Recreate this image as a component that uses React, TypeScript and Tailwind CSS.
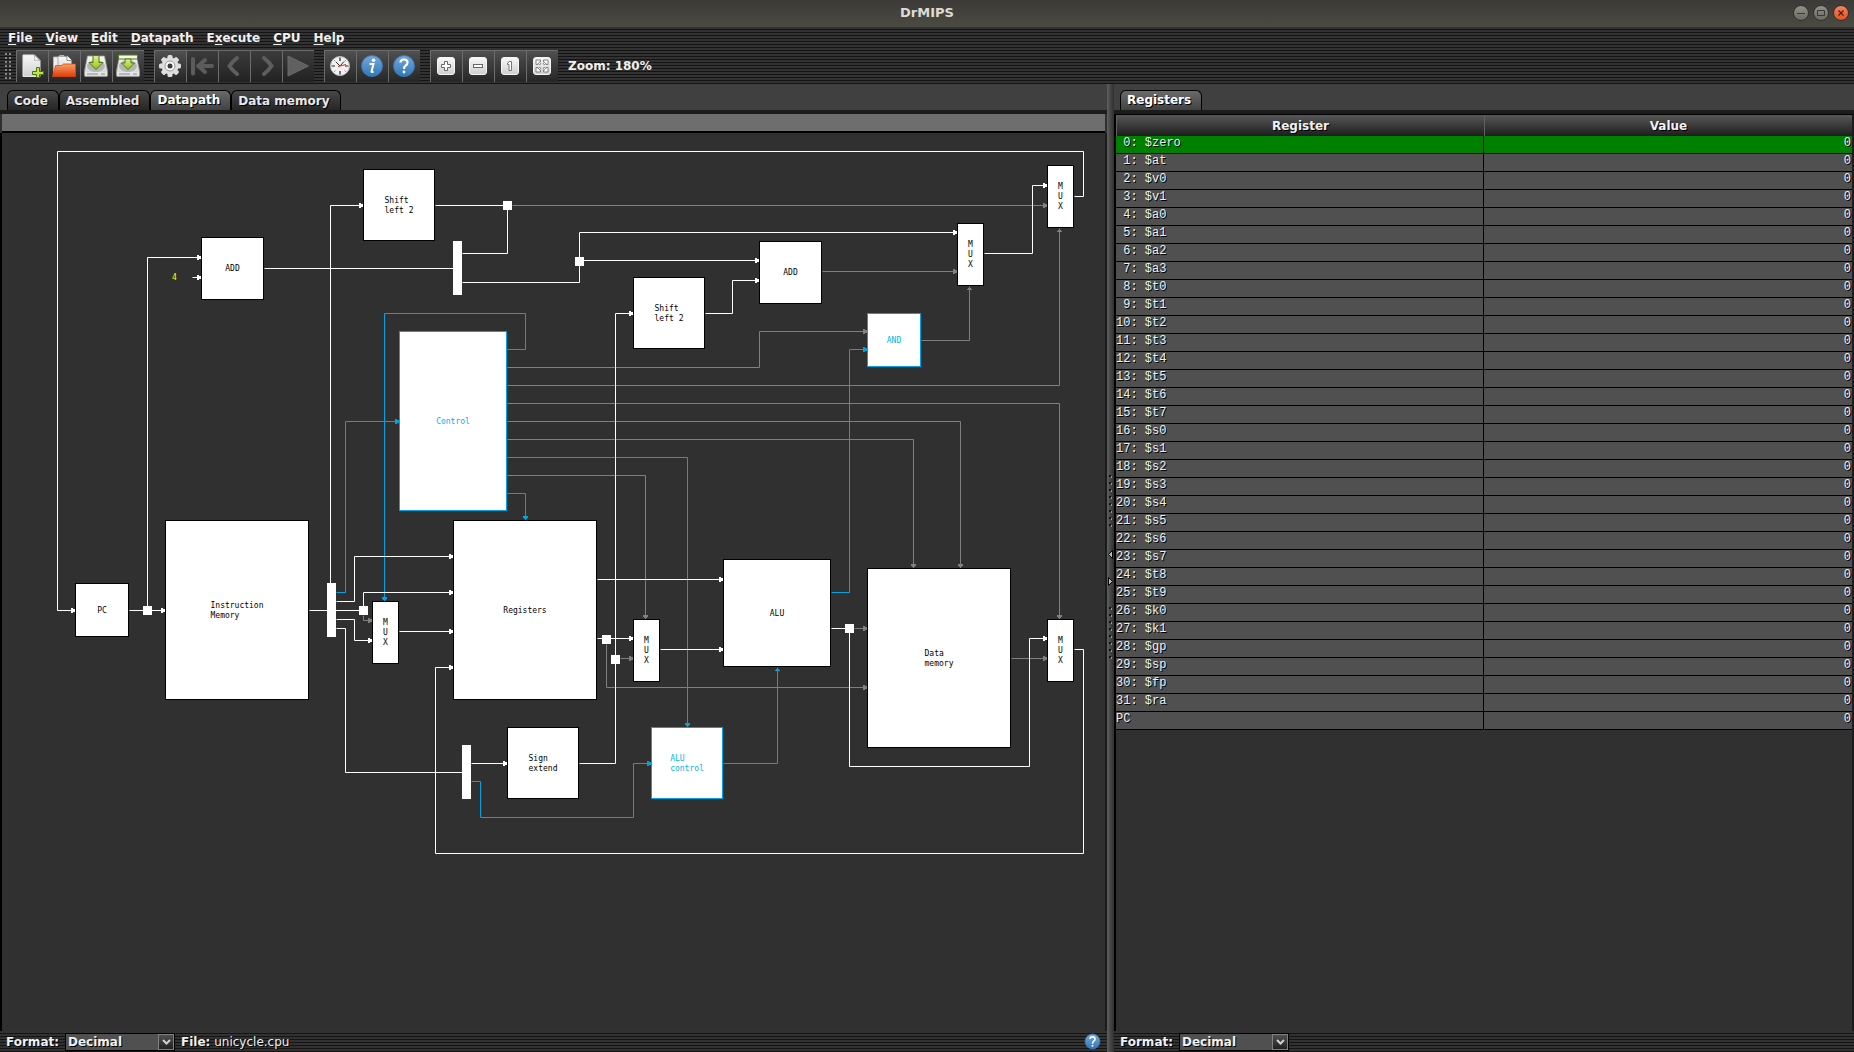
import { useState } from "react";
import type { ReactNode } from "react";

const STRIPES = "bg-[repeating-linear-gradient(180deg,#323232_0px,#323232_2px,#141414_2px,#141414_3px)]";
const SHADOW = "[text-shadow:1px_1px_0_#000]";

/* ---------- Datapath data ---------- */

type Tone = "white" | "gray" | "blue";
const TONES: Record<Tone, string> = { white: "#ffffff", gray: "#808080", blue: "#00a2e6" };

type Block = { x: number; y: number; w: number; h: number; label: string[]; control?: boolean };

const BLOCKS: Block[] = [
  { x: 75, y: 583, w: 54, h: 54, label: ["PC"] },
  { x: 165, y: 520, w: 144, h: 180, label: ["Instruction", "Memory"] },
  { x: 363, y: 169, w: 72, h: 72, label: ["Shift", "left 2"] },
  { x: 201, y: 237, w: 63, h: 63, label: ["ADD"] },
  { x: 399, y: 331, w: 108, h: 180, label: ["Control"], control: true },
  { x: 633, y: 277, w: 72, h: 72, label: ["Shift", "left 2"] },
  { x: 759, y: 241, w: 63, h: 63, label: ["ADD"] },
  { x: 957, y: 223, w: 27, h: 63, label: ["M", "U", "X"] },
  { x: 1047, y: 165, w: 27, h: 63, label: ["M", "U", "X"] },
  { x: 867, y: 313, w: 54, h: 54, label: ["AND"], control: true },
  { x: 453, y: 520, w: 144, h: 180, label: ["Registers"] },
  { x: 372, y: 601, w: 27, h: 63, label: ["M", "U", "X"] },
  { x: 507, y: 727, w: 72, h: 72, label: ["Sign", "extend"] },
  { x: 723, y: 559, w: 108, h: 108, label: ["ALU"] },
  { x: 633, y: 619, w: 27, h: 63, label: ["M", "U", "X"] },
  { x: 867, y: 568, w: 144, h: 180, label: ["Data", "memory"] },
  { x: 1047, y: 619, w: 27, h: 63, label: ["M", "U", "X"] },
  { x: 651, y: 727, w: 72, h: 72, label: ["ALU", "control"], control: true },
];

const FORKS: [number, number][] = [
  [143, 606], [503, 201], [575, 257], [359, 606], [602, 635], [611, 655], [845, 624],
];
const DISTRIBUTORS: [number, number][] = [[327, 583], [453, 241], [462, 745]];

type Wire = { tone: Tone; d: string; tip?: [number, number, "r" | "d" | "u"] };

const WIRES: Wire[] = [
  { tone: "gray", d: "M512 205H1047", tip: [1047, 205, "r"] },
  { tone: "gray", d: "M822 271H957", tip: [957, 271, "r"] },
  { tone: "gray", d: "M363 615V620H372", tip: [372, 620, "r"] },
  { tone: "gray", d: "M507 367H759V331H867", tip: [867, 331, "r"] },
  { tone: "gray", d: "M507 385H1059V228", tip: [1059, 228, "u"] },
  { tone: "gray", d: "M507 403H1059V619", tip: [1059, 619, "d"] },
  { tone: "gray", d: "M507 421H960V568", tip: [960, 568, "d"] },
  { tone: "gray", d: "M507 439H913V568", tip: [913, 568, "d"] },
  { tone: "gray", d: "M507 475H645V619", tip: [645, 619, "d"] },
  { tone: "gray", d: "M921 340H969V286", tip: [969, 286, "u"] },
  { tone: "gray", d: "M606 644V687H867", tip: [867, 687, "r"] },
  { tone: "gray", d: "M620 658H633", tip: [633, 658, "r"] },
  { tone: "gray", d: "M854 628H867", tip: [867, 628, "r"] },
  { tone: "gray", d: "M1011 658H1047", tip: [1047, 658, "r"] },
  { tone: "blue", d: "M336 592H345V421H399", tip: [399, 421, "r"] },
  { tone: "blue", d: "M471 781H480V817H633V763H651", tip: [651, 763, "r"] },
  { tone: "blue", d: "M507 349H525V313H384V601", tip: [384, 601, "d"] },
  { tone: "blue", d: "M507 493H525V520", tip: [525, 520, "d"] },
  { tone: "blue", d: "M507 457H687V727", tip: [687, 727, "d"] },
  { tone: "blue", d: "M831 592H849V349H867", tip: [867, 349, "r"] },
  { tone: "blue", d: "M723 763H777V667", tip: [777, 667, "u"] },
  { tone: "white", d: "M1074 196H1083V151H57V610H75", tip: [75, 610, "r"] },
  { tone: "white", d: "M129 610H165", tip: [165, 610, "r"] },
  { tone: "white", d: "M147 610V257H201", tip: [201, 257, "r"] },
  { tone: "white", d: "M192 277H201", tip: [201, 277, "r"] },
  { tone: "white", d: "M264 268H453" },
  { tone: "white", d: "M330 583V205H363", tip: [363, 205, "r"] },
  { tone: "white", d: "M435 205H507V253H462" },
  { tone: "white", d: "M462 282H579V232H957", tip: [957, 232, "r"] },
  { tone: "white", d: "M579 260H759", tip: [759, 260, "r"] },
  { tone: "white", d: "M579 763H615V313H633", tip: [633, 313, "r"] },
  { tone: "white", d: "M705 313H732V280H759", tip: [759, 280, "r"] },
  { tone: "white", d: "M984 253H1032V185H1047", tip: [1047, 185, "r"] },
  { tone: "white", d: "M309 610H363V592H453", tip: [453, 592, "r"] },
  { tone: "white", d: "M336 601H354V556H453", tip: [453, 556, "r"] },
  { tone: "white", d: "M336 619H354V640H372", tip: [372, 640, "r"] },
  { tone: "white", d: "M336 628H345V772H462" },
  { tone: "white", d: "M399 631H453", tip: [453, 631, "r"] },
  { tone: "white", d: "M1074 649H1083V853H435V667H453", tip: [453, 667, "r"] },
  { tone: "white", d: "M471 763H507", tip: [507, 763, "r"] },
  { tone: "white", d: "M597 579H723", tip: [723, 579, "r"] },
  { tone: "white", d: "M597 638H633", tip: [633, 638, "r"] },
  { tone: "white", d: "M660 649H723", tip: [723, 649, "r"] },
  { tone: "white", d: "M831 628H849V766H1029V638H1047", tip: [1047, 638, "r"] },
];

const TIPS = {
  r: "M-4 -2H-2V-1H0V2H-2V3H-4Z",
  d: "M-2 -4H3V-2H2V-1H1V0H0V-1H-1V-2H-2Z",
  u: "M0 1H1V2H2V3H3V4H-2V3H-1V2H0Z",
};

/* The model's top-left corner, in the coordinates used above. */
const ORIGIN = { x: 3, y: 133 };

function Datapath() {
  return (
    <div className="relative h-[760px] w-[1100px]">
      <svg className="absolute inset-0" width="1100" height="760" viewBox="3 133 1100 760" aria-hidden="true">
        {WIRES.map((w) => (
          <g key={w.d}>
            <path
              d={w.d}
              transform="translate(0.5 0.5)"
              fill="none"
              stroke={TONES[w.tone]}
              strokeWidth="1"
            />
            {w.tip && (
              <path d={TIPS[w.tip[2]]} fill={TONES[w.tone]} transform={`translate(${w.tip[0]} ${w.tip[1]})`} />
            )}
          </g>
        ))}
        {FORKS.map(([x, y]) => (
          <rect key={`${x}-${y}`} x={x} y={y} width="9" height="9" fill="#fff" />
        ))}
        {DISTRIBUTORS.map(([x, y]) => (
          <rect key={`${x}-${y}`} x={x} y={y} width="9" height="54" fill="#fff" />
        ))}
      </svg>
      {BLOCKS.map((b) => (
        <div
          key={`${b.x}-${b.y}`}
          className={`absolute flex items-center justify-center border bg-white pt-px font-['DejaVu_Sans_Mono',monospace] text-[8px] leading-[10px] ${
            b.control ? "border-[#00a2e6] text-[#00b4e6]" : "border-black text-black"
          }`}
          style={{ left: b.x - ORIGIN.x, top: b.y - ORIGIN.y, width: b.w, height: b.h }}
        >
          <div>
            {b.label.map((line) => (
              <div key={line}>{line}</div>
            ))}
          </div>
        </div>
      ))}
      <span
        className="absolute font-['DejaVu_Sans_Mono',monospace] text-[8px] leading-[10px] text-[#ffff00]"
        style={{ left: 172 - ORIGIN.x, top: 273 - ORIGIN.y }}
      >
        4
      </span>
    </div>
  );
}

/* ---------- Icons ---------- */

function Svg({ children, size = 24 }: { children: ReactNode; size?: number }) {
  return (
    <svg width={size} height={size} viewBox="0 0 24 24" aria-hidden="true">
      {children}
    </svg>
  );
}

function Defs() {
  return (
    <svg width="0" height="0" className="absolute" aria-hidden="true">
      <defs>
        <linearGradient id="paper" x1="0" y1="0" x2="0" y2="1">
          <stop offset="0" stopColor="#f8f8f8" />
          <stop offset="1" stopColor="#cfcfcf" />
        </linearGradient>
        <linearGradient id="folder" x1="0" y1="0" x2="0" y2="1">
          <stop offset="0" stopColor="#f5a06c" />
          <stop offset="1" stopColor="#e23d05" />
        </linearGradient>
        <linearGradient id="lime" x1="0" y1="0" x2="0" y2="1">
          <stop offset="0" stopColor="#e0f08a" />
          <stop offset="1" stopColor="#8fc21c" />
        </linearGradient>
        <linearGradient id="ball" x1="0" y1="0" x2="0" y2="1">
          <stop offset="0" stopColor="#78a8dc" />
          <stop offset="1" stopColor="#2f78b8" />
        </linearGradient>
      </defs>
    </svg>
  );
}

const NewIcon = () => (
  <Svg>
    <path d="M3 1H14.5L20 6.500V22.5H3Z" fill="url(#paper)" stroke="#e8e8e8" />
    <path d="M14 1Q15.500 4 14.500 6.500Q17 5.500 20 6.800Z" fill="#fff" stroke="#aaa" strokeWidth=".8" />
    <path d="M16.5 13.5H19.5V17.5H23.5V20.5H19.5V23.5H16.5V20.5H12.5V17.5H16.5Z" fill="#c5e04a" stroke="#3e7a06" />
  </Svg>
);
const OpenIcon = () => (
  <Svg>
    <path d="M1.500 3H6L8 1.500H12V21H1.500Z" fill="#eee" stroke="#bbb" strokeWidth=".8" />
    <path d="M6 2.500H15L19.5 7V20H6Z" fill="url(#paper)" stroke="#999" strokeWidth=".8" />
    <path d="M15 1.500V6.5H20" fill="#fff" stroke="#777" strokeWidth=".8" />
    <path d="M.5 22.5L3.5 11.500H9.500L11.500 10H23.5V22.5Z" fill="url(#folder)" stroke="#d94a12" strokeWidth=".8" />
  </Svg>
);
const Drive = () => (
  <>
    <path d="M3.5 2H20.5L23.5 17V21.5Q23.5 22.5 22.5 22.5H1.5Q.5 22.5 .5 21.5V17Z" fill="url(#paper)" stroke="#999" strokeWidth=".8" />
    <ellipse cx="12" cy="12" rx="9" ry="6" fill="#b5b5b5" />
    <path d="M1 18H23V21.5H1Z" fill="#e6e6e6" />
    <path d="M3 20H14M17 20H21" stroke="#8b8b8b" />
  </>
);
const SaveIcon = () => (
  <Svg>
    <Drive />
    <path d="M9 1.500H15V8.500H19L12 15.5L5 8.500H9Z" fill="url(#lime)" stroke="#4e7d0b" />
  </Svg>
);
const SaveAsIcon = () => (
  <Svg>
    <Drive />
    <path d="M2.5 1H21.5V5H2.5Z" fill="#f5f5f5" stroke="#4e7d0b" />
    <path d="M9 5H15V9H18.5L12 15.5L5.5 9H9Z" fill="url(#lime)" stroke="#4e7d0b" />
  </Svg>
);
const GearIcon = () => (
  <Svg>
    {[0, 45, 90, 135].map((a) => (
      <rect key={a} x="9.5" y="1" width="5" height="22" rx="1.5" fill="#dedede" transform={`rotate(${a} 12 12)`} />
    ))}
    <circle cx="12" cy="12" r="8.5" fill="#dedede" />
    <circle cx="12" cy="12" r="5" fill="#fafafa" stroke="#999" />
    <circle cx="12" cy="12" r="2.5" fill="#3b3b3b" />
  </Svg>
);
const FirstIcon = () => (
  <Svg>
    <path d="M3 5V19.500M22 12H8M15 6L8.500 12L15 18" fill="none" stroke="#5c5c5c" strokeWidth="4" strokeLinecap="round" strokeLinejoin="round" />
  </Svg>
);
const PrevIcon = () => (
  <Svg>
    <path d="M15 4Q10 8 7.500 12Q10 16 15 20" fill="none" stroke="#5e5e5e" strokeWidth="4" strokeLinecap="round" />
  </Svg>
);
const NextIcon = () => (
  <Svg>
    <path d="M10 4Q15 8 17.500 12Q15 16 10 20" fill="none" stroke="#5e5e5e" strokeWidth="4" strokeLinecap="round" />
  </Svg>
);
const RunIcon = () => (
  <Svg>
    <path d="M2 2L22.500 12L2 22Z" fill="#606060" stroke="#6a6a6a" />
  </Svg>
);
const ClockIcon = () => (
  <Svg>
    <circle cx="12" cy="12" r="9.5" fill="#f2f2f2" stroke="#bdbdbd" />
    <path d="M12 3.500V7M12 17V20.500M3.500 12H7M17 12H20.500" stroke="#222" strokeWidth="1.2" />
    <path d="M6 6L7.500 7.500M18 6L16.500 7.500M6 18L7.500 16.500M18 18L16.500 16.500" stroke="#999" />
    <path d="M12 12L8 8M12 12L16 7.500" stroke="#333" />
    <path d="M10 12.500L18 10.500" stroke="#e22" />
  </Svg>
);
const InfoIcon = () => (
  <Svg>
    <circle cx="12" cy="12" r="10.500" fill="url(#ball)" stroke="#3c78b4" />
    <circle cx="13.500" cy="6.200" r="1.800" fill="#fff" />
    <path d="M9.500 10H13.500L11.500 17.500Q11.500 18.500 13.500 17.500" fill="none" stroke="#fff" strokeWidth="2" />
  </Svg>
);
const HelpIcon = ({ size = 24 }: { size?: number }) => (
  <Svg size={size}>
    <circle cx="12" cy="12" r="10.500" fill="url(#ball)" stroke="#3c78b4" />
    <path d="M8.500 8.500Q8.500 5.500 12 5.500Q15.500 5.500 15.500 8.500Q15.500 10.500 13.500 11.700Q12 12.700 12 15" fill="none" stroke="#fff" strokeWidth="2.200" />
    <circle cx="12" cy="18" r="1.400" fill="#fff" />
  </Svg>
);
const Key = ({ children }: { children: ReactNode }) => (
  <Svg>
    <rect x="3.500" y="3.500" width="17" height="17" rx="2.500" fill="url(#paper)" stroke="#f4f4f4" />
    {children}
  </Svg>
);
const ZoomInIcon = () => (
  <Key>
    <path d="M10.500 7.500H13.500V10.500H16.500V13.500H13.500V16.500H10.500V13.500H7.500V10.500H10.500Z" fill="#fff" stroke="#666" />
  </Key>
);
const ZoomOutIcon = () => (
  <Key>
    <rect x="7.500" y="10.500" width="9" height="3" fill="#fff" stroke="#666" />
  </Key>
);
const ZoomOneIcon = () => (
  <Key>
    <path d="M11 7.500H13.500V16.500H11V10.500H9.500V9Q11 9 11 7.500Z" fill="#fff" stroke="#777" />
  </Key>
);
const ZoomFitIcon = () => (
  <Key>
    {[0, 90, 180, 270].map((a) => (
      <path key={a} d="M6 6H10.500V8L9.200 8.200L10.800 9.800L9.800 10.800L8.200 9.200L8 10.500H6Z" fill="#fff" stroke="#777" strokeWidth=".9" transform={`rotate(${a} 12 12)`} />
    ))}
  </Key>
);

/* ---------- Chrome ---------- */

type Tool = { name: string; icon: ReactNode; disabled?: boolean };

const TOOL_GROUPS: Tool[][] = [
  [
    { name: "New", icon: <NewIcon /> },
    { name: "Open", icon: <OpenIcon /> },
    { name: "Save", icon: <SaveIcon /> },
    { name: "Save as", icon: <SaveAsIcon /> },
  ],
  [
    { name: "Assemble", icon: <GearIcon /> },
    { name: "Restart", icon: <FirstIcon />, disabled: true },
    { name: "Back step", icon: <PrevIcon />, disabled: true },
    { name: "Step", icon: <NextIcon />, disabled: true },
    { name: "Run", icon: <RunIcon />, disabled: true },
  ],
  [
    { name: "Performance mode", icon: <ClockIcon /> },
    { name: "Statistics", icon: <InfoIcon /> },
    { name: "Supported instructions", icon: <HelpIcon /> },
  ],
  [
    { name: "Zoom in", icon: <ZoomInIcon /> },
    { name: "Zoom out", icon: <ZoomOutIcon /> },
    { name: "Normal zoom", icon: <ZoomOneIcon /> },
    { name: "Fit to panel", icon: <ZoomFitIcon /> },
  ],
];

const MENUS: [string, string, string][] = [
  ["", "F", "ile"], ["", "V", "iew"], ["", "E", "dit"], ["", "D", "atapath"],
  ["E", "x", "ecute"], ["", "C", "PU"], ["", "H", "elp"],
];

function TitleBar() {
  const round = "flex size-4 items-center justify-center rounded-full border border-[#33322e]";
  return (
    <header className="relative flex h-[27px] shrink-0 items-center justify-end bg-linear-to-b from-[#3b3a36] to-[#4b4a43] px-[5px] pb-px">
      <h1 className="absolute inset-x-0 text-center text-[13px] font-bold text-[#dfdbd2]">DrMIPS</h1>
      <div className="relative flex gap-1">
        <button aria-label="Minimize" className={`${round} bg-linear-to-b from-[#92918a] to-[#6a6962]`}>
          <svg width="8" height="8" viewBox="0 0 8 8"><path d="M0 4.500H8" stroke="#3a3935" /></svg>
        </button>
        <button aria-label="Maximize" className={`${round} bg-linear-to-b from-[#92918a] to-[#6a6962]`}>
          <svg width="8" height="8" viewBox="0 0 8 8"><path d="M.5 1.500H7.500V6.500H.5Z" fill="none" stroke="#3a3935" /></svg>
        </button>
        <button aria-label="Close" className={`${round} bg-linear-to-b from-[#f7835f] to-[#e2501d]`}>
          <svg width="8" height="8" viewBox="0 0 8 8"><path d="M1.500 1.500L6.500 6.500M6.500 1.500L1.500 6.500" stroke="#4a2010" strokeWidth="1.300" /></svg>
        </button>
      </div>
    </header>
  );
}

function Tab({ label, selected, onSelect }: { label: string; selected: boolean; onSelect?: () => void }) {
  return (
    <button
      role="tab"
      aria-selected={selected}
      onClick={onSelect}
      className={`h-5 rounded-t-md border border-b-0 border-black pr-[10px] pl-[6px] text-[12px] leading-4 font-bold ${SHADOW} ${
        selected
          ? "bg-linear-to-b from-[#6a6a6a] to-[#424242] pb-[2px] text-white"
          : "bg-linear-to-b from-[#484848] to-[#262626] text-[#e8e8e8]"
      }`}
    >
      {label}
    </button>
  );
}

const TAB_STRIP = "flex h-[30px] shrink-0 items-end border-b-4 border-[#1c1c1c] bg-[#404040] box-border";

function FormatSelect({ id }: { id: string }) {
  return (
    <>
      <label htmlFor={id} className={`font-bold text-[#f0f0f0] ${SHADOW}`}>Format:</label>
      <span className="relative flex">
        <select
          id={id}
          className={`h-[18px] w-[110px] appearance-none border border-black bg-[#505050] pl-[2px] text-[12px] leading-4 font-bold text-[#f0f0f0] ${SHADOW}`}
        >
          <option>Decimal</option>
          <option>Binary</option>
          <option>Hexadecimal</option>
        </select>
        <span className="pointer-events-none absolute top-px right-px flex h-4 w-4 items-center justify-center border border-[#808080] bg-linear-to-b from-[#505050] to-[#222222]">
          <svg width="9" height="6" viewBox="0 0 9 6" aria-hidden="true">
            <path d="M1 1L4.500 4.500L8 1" fill="none" stroke="#d0d0d0" strokeWidth="2" />
          </svg>
        </span>
      </span>
    </>
  );
}

function Splitter() {
  const dots = (top: number) =>
    Array.from({ length: 8 }, (_, i) => (
      <g key={`${top}-${i}`}>
        <rect x="2" y={top + i * 7} width="2" height="2" fill="#111" />
        <rect x="4" y={top + 1 + i * 7} width="1" height="2" fill="#999" />
      </g>
    ));
  return (
    <div
      role="separator"
      aria-orientation="vertical"
      className="flex w-[7px] shrink-0 items-center justify-center bg-linear-to-r from-[#606060] via-[#454545] to-[#303030]"
    >
      <svg width="7" height="190" viewBox="0 0 7 190" aria-hidden="true">
        {dots(2)}
        {dots(134)}
        <path d="M5.500 77.500V85.500L1.500 81.500Z" fill="#bbb" stroke="#000" />
        <path d="M1.500 104.500V112.500L5.500 108.500Z" fill="#bbb" stroke="#000" />
      </svg>
    </div>
  );
}

const REGISTERS = [
  "zero", "at", "v0", "v1", "a0", "a1", "a2", "a3", "t0", "t1", "t2", "t3", "t4", "t5", "t6", "t7",
  "s0", "s1", "s2", "s3", "s4", "s5", "s6", "s7", "t8", "t9", "k0", "k1", "gp", "sp", "fp", "ra",
].map((name, i) => `${String(i).padStart(2, " ")}: $${name}`);

function RegisterTable() {
  const head = `h-[21px] border-l border-[#606060] bg-linear-to-b from-[#585858] to-[#1e1e1e] p-0 text-[12px] font-bold text-[#f0f0f0] ${SHADOW}`;
  return (
    <table className="w-full table-fixed border-separate border-spacing-0">
      <thead>
        <tr>
          <th className={head}>Register</th>
          <th className={head}>Value</th>
        </tr>
      </thead>
      <tbody className={`font-['Liberation_Mono',monospace] text-[12px] text-[#f0f0f0] ${SHADOW}`}>
        {[...REGISTERS, "PC"].map((name, i) => (
          <tr key={name} className={i === 0 ? "bg-[#008000]" : "bg-[#505050]"}>
            <td className="h-[18px] border-r border-b border-black p-0 align-top leading-[15px] whitespace-pre">{name}</td>
            <td className="h-[18px] border-b border-black p-0 pr-px text-right align-top leading-[15px]">0</td>
          </tr>
        ))}
      </tbody>
    </table>
  );
}

const TABS = ["Code", "Assembled", "Datapath", "Data memory"];

export default function App() {
  const [tab, setTab] = useState("Datapath");
  return (
    <div className="flex h-screen flex-col overflow-hidden bg-[#303030] font-['DejaVu_Sans',sans-serif] text-[12px]">
      <Defs />
      <TitleBar />
      <div className={`flex shrink-0 flex-col ${STRIPES}`}>
        <nav className="flex h-[21px] items-center gap-[13px] px-2" aria-label="Main menu">
          {MENUS.map(([pre, key, post]) => (
            <button key={pre + key + post} className="text-[12px] font-bold text-[#f0f0f0]">
              {pre}
              <span className="underline underline-offset-2">{key}</span>
              {post}
            </button>
          ))}
        </nav>
        <div className="flex h-9 items-center gap-[10px] pl-1" role="toolbar" aria-label="Tools">
          <div className="-mr-[6px] h-7 w-[8px] bg-[radial-gradient(#8a8a8a_0.7px,transparent_1px)] bg-size-[4px_4px]" />
          {TOOL_GROUPS.map((group) => (
            <div key={group[0].name} className="flex">
              {group.map((t) => (
                <button
                  key={t.name}
                  aria-label={t.name}
                  title={t.name}
                  disabled={t.disabled}
                  className={`flex size-8 items-center justify-center border-t border-l border-[#6c6c6c] bg-linear-to-b pr-[2px] pb-[2px] ${
                    t.disabled ? "from-[#3c3c3c] to-[#222222]" : "from-[#505050] to-[#262626]"
                  }`}
                >
                  {t.icon}
                </button>
              ))}
            </div>
          ))}
          <span className="font-bold text-[#f0f0f0]">Zoom: 180%</span>
        </div>
      </div>

      <div className="flex min-h-0 flex-1">
        <section className="flex min-w-0 flex-[1107_1_0%] flex-col">
          <div role="tablist" className={`${TAB_STRIP} pl-[7px]`}>
            {TABS.map((t) => (
              <Tab key={t} label={t} selected={t === tab} onSelect={() => setTab(t)} />
            ))}
          </div>
          <div className="mr-[2px] ml-[2px] h-[19px] shrink-0 border-b-2 border-black bg-[#6e6e6e]" />
          <main className="min-h-0 flex-1 overflow-hidden border-x-2 border-r-[#1c1c1c] border-l-black pl-px">
            <Datapath />
          </main>
          <footer className={`flex h-[21px] shrink-0 items-center gap-[6px] px-[6px] text-[#f0f0f0] ${STRIPES}`}>
            <FormatSelect id="datapath-format" />
            <span className={SHADOW}>
              <b>File:</b> unicycle.cpu
            </span>
            <button aria-label="Help" className="ml-auto">
              <HelpIcon size={17} />
            </button>
          </footer>
        </section>

        <Splitter />

        <section className="flex min-w-0 flex-[740_1_0%] flex-col">
          <div role="tablist" className={`${TAB_STRIP} pl-[6px]`}>
            <Tab label="Registers" selected />
          </div>
          <div className="min-h-0 flex-1 overflow-hidden border-x-2 border-t border-black border-r-[#1c1c1c]">
            <RegisterTable />
          </div>
          <footer className={`flex h-[21px] shrink-0 items-center gap-[6px] px-[6px] ${STRIPES}`}>
            <FormatSelect id="register-format" />
          </footer>
        </section>
      </div>
    </div>
  );
}
